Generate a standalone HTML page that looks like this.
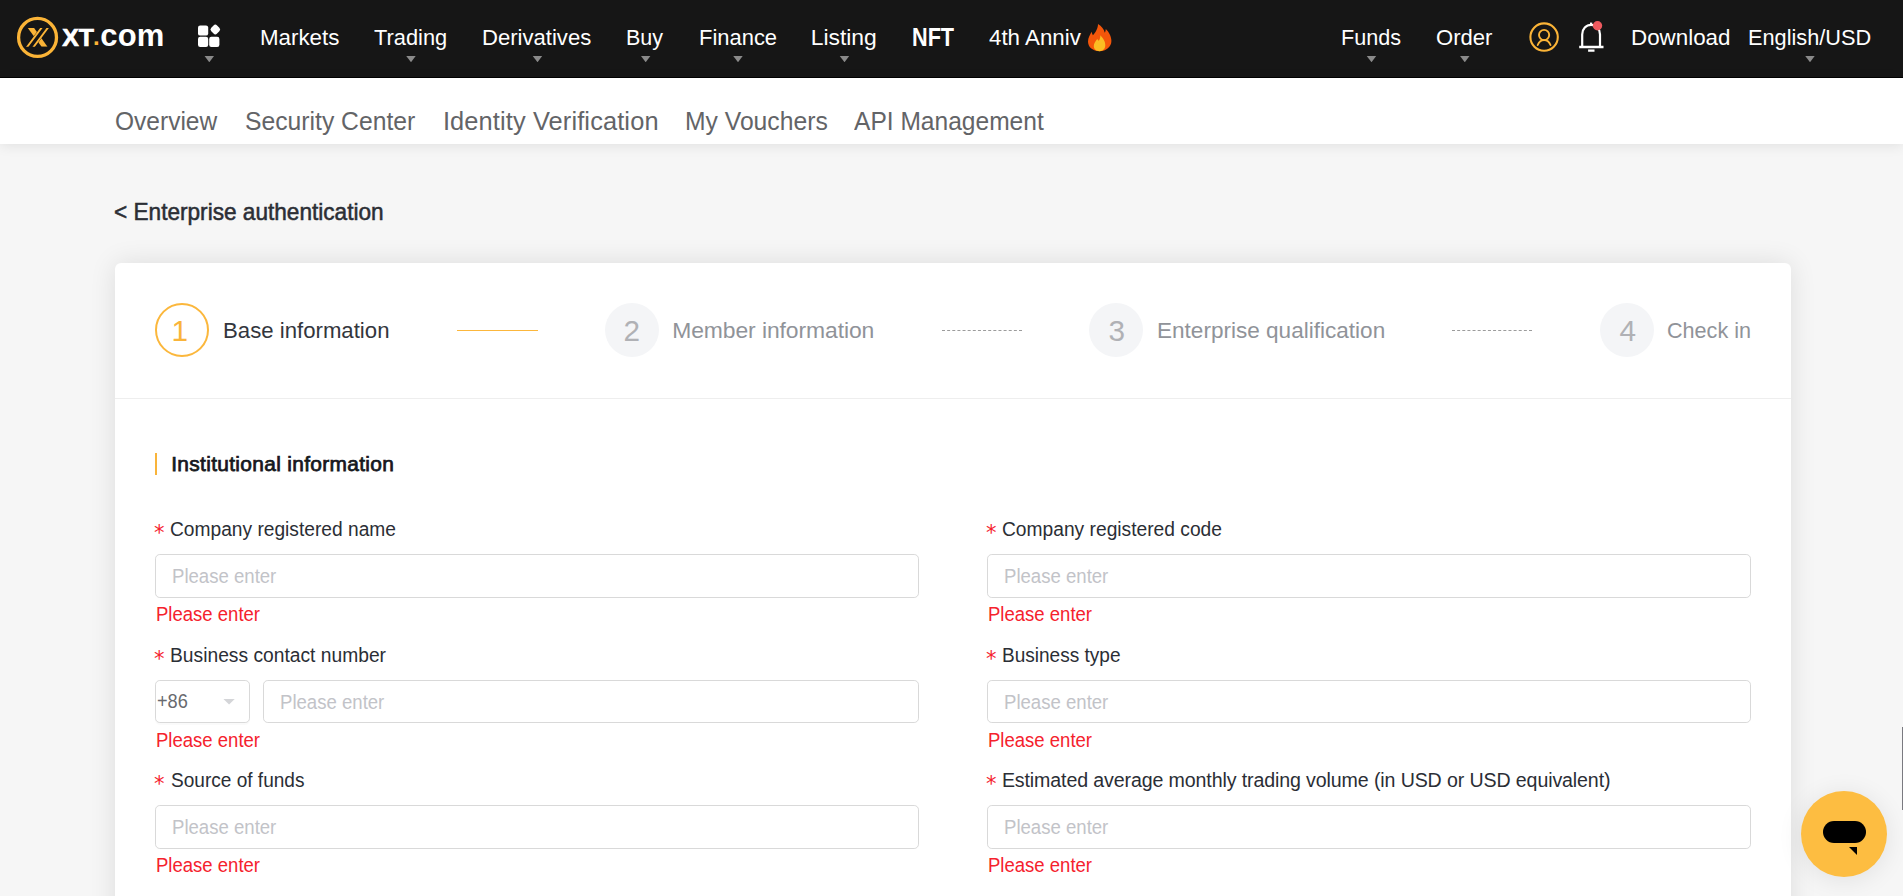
<!DOCTYPE html>
<html lang="en">
<head>
<meta charset="utf-8">
<title>XT.com - Enterprise authentication</title>
<style>
*{margin:0;padding:0;box-sizing:border-box}
h1,h2{font-weight:inherit;font-size:inherit}
i{font-style:normal}
html,body{width:1903px;height:896px;overflow:hidden}
body{position:relative;background:#f6f6f6;font-family:"Liberation Sans",sans-serif;}
.t{position:absolute;line-height:40px;white-space:pre;display:block;transform-origin:0 0}
header{position:absolute;left:0;top:0;width:1903px;height:78px;background:#161616;border-bottom:1px solid #000}
.ar{position:absolute;top:55.6px;width:10.2px;height:6.6px;background:#8a8a8a;clip-path:polygon(0 0,100% 0,50% 100%)}
.subnav{position:absolute;left:0;top:78px;width:1903px;height:66px;background:#fff;box-shadow:0 2px 12px rgba(0,0,0,.085)}
.card{position:absolute;left:115px;top:263px;width:1676px;height:700px;background:#fff;border-radius:6px;box-shadow:0 0 27px rgba(0,0,0,.105)}
.divider{position:absolute;left:115px;top:398px;width:1676px;height:1px;background:#eeeeee}
.circ{position:absolute;top:303px;width:54px;height:54px;border-radius:50%;background:#f4f5f7}
.circ.on{background:none}
.ln{position:absolute;top:330px;height:0;border-top:1px dashed #9c9c9c}
.ln.on{border-top:1px solid #fcb73c}
.bar{position:absolute;left:155px;top:453px;width:2px;height:22px;background:#f9b43a}
.inp{position:absolute;border:1px solid #d9d9d9;border-radius:4.8px;background:#fff}
.caret{position:absolute;left:223.2px;top:698.8px;width:11.8px;height:5.8px;background:#d4d5d8;clip-path:polygon(0 0,100% 0,50% 100%)}
.chat{position:absolute;left:1801px;top:791px;width:86px;height:86px;border-radius:50%;background:#fdbd41;box-shadow:0 3px 26px rgba(0,0,0,.09)}
.chat b{position:absolute;left:21.5px;top:30px;width:43px;height:22px;border-radius:11px;background:#000}
.chat i{position:absolute;left:48.1px;top:56.3px;width:0;height:0;border-left:8.8px solid transparent;border-top:8.6px solid #000}
.sb{position:absolute;left:1902px;top:727px;width:1px;height:83px;background:#7a7a80}
</style>
</head>
<body>
<header>
<svg class="logo" style="position:absolute;left:0;top:0" width="240" height="77" viewBox="0 0 240 77">
<defs><clipPath id="xc"><rect x="20" y="28.1" width="36" height="18.7"/></clipPath></defs>
<circle cx="37.55" cy="37.4" r="18.95" fill="none" stroke="#fbb437" stroke-width="3.3"/>
<g clip-path="url(#xc)">
<path d="M27.8 28.1h6.3l13.4 18.7h-5.9z" fill="#fbb437"/>
<path d="M44.45 28.1L30.5 46.8" stroke="#161616" stroke-width="7.5" transform="translate(0 0)" stroke-linecap="square"/>
<path d="M42 27.17L26.55 47.73M48.3 27.17L33 47.73" stroke="#fbb437" stroke-width="1.9" stroke-linecap="butt"/>
</g>
<text font-family="Liberation Sans, sans-serif" font-weight="700" fill="#fff"><tspan x="62.2" y="46.2" font-size="24" textLength="31.7" lengthAdjust="spacingAndGlyphs" stroke="#fff" stroke-width="0.7">XT</tspan><tspan x="93.1" y="45" font-size="24" fill="#fbb437">.</tspan><tspan x="100.2" y="46.3" font-size="31" letter-spacing="0.2">com</tspan></text>
<g fill="#fff">
<rect x="198" y="25.4" width="10.2" height="10.2" rx="2.2"/>
<rect x="198" y="36.8" width="10.2" height="10.2" rx="2.2"/>
<rect x="209.2" y="36.8" width="10.2" height="10.2" rx="2.2"/>
<rect x="211.2" y="25.4" width="8.2" height="8.2" rx="2.5" transform="rotate(45 215.3 29.5)"/>
</g>
</svg>
<nav>
<span class="t" style="left:260.02px;top:17px;font-size:22.9px;color:#fff;transform:scaleX(0.9755);">Markets</span>
<span class="t" style="left:374.30px;top:17px;font-size:22.9px;color:#fff;transform:scaleX(0.9535);">Trading</span>
<span class="t" style="left:482.24px;top:17px;font-size:22.9px;color:#fff;transform:scaleX(0.9645);">Derivatives</span>
<span class="t" style="left:626.06px;top:17px;font-size:22.9px;color:#fff;transform:scaleX(0.9385);">Buy</span>
<span class="t" style="left:699.04px;top:17px;font-size:22.9px;color:#fff;transform:scaleX(0.9585);">Finance</span>
<span class="t" style="left:810.70px;top:17px;font-size:22.9px;color:#fff;letter-spacing:-0.023px;">Listing</span>
<span class="t" style="left:911.73px;top:17px;font-size:25px;color:#fff;font-weight:700;transform:scaleX(0.8663);">NFT</span>
<span class="t" style="left:989.00px;top:17px;font-size:22.9px;color:#fff;transform:scaleX(0.9750);">4th Anniv</span>
<span class="t" style="left:1341.06px;top:17px;font-size:22.9px;color:#fff;transform:scaleX(0.9441);">Funds</span>
<span class="t" style="left:1436.04px;top:17px;font-size:22.9px;color:#fff;transform:scaleX(0.9639);">Order</span>
<span class="t" style="left:1630.72px;top:17px;font-size:22.9px;color:#fff;transform:scaleX(0.9773);">Download</span>
<span class="t" style="left:1747.75px;top:17px;font-size:22.9px;color:#fff;transform:scaleX(0.9490);">English/USD</span>
<i class="ar" style="left:204.2px"></i>
<i class="ar" style="left:405.9px"></i>
<i class="ar" style="left:532.4px"></i>
<i class="ar" style="left:640.6px"></i>
<i class="ar" style="left:732.9px"></i>
<i class="ar" style="left:839.4px"></i>
<i class="ar" style="left:1366.4px"></i>
<i class="ar" style="left:1459.7px"></i>
<i class="ar" style="left:1804.9px"></i>
<svg style="position:absolute;left:1087.8px;top:24px" width="24" height="28" viewBox="0 0 24 28">
<path d="M10 0C13.5 2 16.200 5.500 16.800 8.800C17.400 7.600 17.800 6.400 17.800 5C21 8 23.400 12.500 23.400 17C23.400 23 18 27.200 11.600 27.200C5 27.200 0 23.500 0 17.600C0 13.500 2.200 10.500 3.800 7.800C3.800 9 4.200 10.200 4.900 11.200C7.500 8.500 10 4.500 10 0Z" fill="#f4560a"/>
<path d="M12.300 11.300C14.500 13.500 17.300 17 17.300 21C17.300 25 14.800 27.200 11.600 27.200C8.200 27.200 5.800 25.200 5.800 22C5.800 19 7.800 17 9.300 15C9.600 15.800 10.200 16.400 10.800 16.800C12 15.200 12.500 13.200 12.300 11.300Z" fill="#fbbd23"/>
</svg>
<svg style="position:absolute;left:1520px;top:0" width="100" height="77" viewBox="1520 0 100 77" fill="none">
<circle cx="1544.1" cy="37.1" r="13.7" stroke="#fbb437" stroke-width="2.1"/>
<circle cx="1544.1" cy="35" r="5.1" stroke="#fbb437" stroke-width="1.9"/>
<path d="M1537.700 45c1.300-3.200 3.700-4.900 6.400-4.900s5.100 1.700 6.400 4.900" stroke="#fbb437" stroke-width="1.900" stroke-linecap="round"/>
<path d="M1582.200 47V34.400a8.900 9.600 0 0 1 17.800 0V47" stroke="#fff" stroke-width="2.200"/>
<path d="M1579.200 47h24.300" stroke="#fff" stroke-width="2.500"/>
<path d="M1591.100 25.200V22.600" stroke="#fff" stroke-width="2.200"/>
<path d="M1588.100 50.600h6.400" stroke="#fff" stroke-width="2.300"/>
<circle cx="1597.500" cy="25.700" r="4.700" fill="#ee5a5f"/>
</svg>
</nav>
</header>
<div class="subnav"></div>
<nav class="subnav-links">
<span class="t" style="left:114.53px;top:101px;font-size:25.4px;color:#636467;transform:scaleX(0.9661);">Overview</span>
<span class="t" style="left:244.53px;top:101px;font-size:25.4px;color:#636467;transform:scaleX(0.9729);">Security Center</span>
<span class="t" style="left:442.90px;top:101px;font-size:25.4px;color:#636467;letter-spacing:0.125px;">Identity Verification</span>
<span class="t" style="left:684.56px;top:101px;font-size:25.4px;color:#636467;transform:scaleX(0.9725);">My Vouchers</span>
<span class="t" style="left:854.30px;top:101px;font-size:25.4px;color:#636467;transform:scaleX(0.9672);">API Management</span>
</nav>
<main>
<h1><span class="t" style="left:114.05px;top:192px;font-size:23.8px;color:#2b2e35;-webkit-text-stroke:0.55px #2b2e35;transform:scaleX(0.9502);">&lt; Enterprise authentication</span></h1>
<section class="card"></section>
<div class="divider"></div>
<div class="steps">
<div class="circ on" style="left:155px"><svg width="54" height="54" viewBox="0 0 54 54" style="display:block"><circle cx="27" cy="27" r="26" fill="#fff" stroke="#fbb73c" stroke-width="2"/></svg></div>
<div class="circ" style="left:605px"></div>
<div class="circ" style="left:1089px"></div>
<div class="circ" style="left:1600px"></div>
<div class="ln on" style="left:457px;width:81px"></div>
<div class="ln" style="left:942px;width:80px"></div>
<div class="ln" style="left:1452px;width:80px"></div>
<span class="t" style="left:171.60px;top:311px;font-size:29.7px;color:#f9b43a;">1</span>
<span class="t" style="left:223.13px;top:310px;font-size:22.9px;color:#33363d;transform:scaleX(0.9692);">Base information</span>
<span class="t" style="left:623.60px;top:311px;font-size:29.7px;color:#b0b1b5;">2</span>
<span class="t" style="left:672.20px;top:310px;font-size:22.9px;color:#909399;letter-spacing:-0.083px;">Member information</span>
<span class="t" style="left:1108.50px;top:311px;font-size:29.7px;color:#b0b1b5;">3</span>
<span class="t" style="left:1156.51px;top:310px;font-size:22.9px;color:#909399;transform:scaleX(0.9854);">Enterprise qualification</span>
<span class="t" style="left:1619.40px;top:311px;font-size:29.7px;color:#b0b1b5;">4</span>
<span class="t" style="left:1667.36px;top:310px;font-size:22.9px;color:#909399;transform:scaleX(0.9436);">Check in</span>
</div>
<div class="bar"></div>
<h2><span class="t" style="left:171.20px;top:444px;font-size:20.9px;color:#16181d;letter-spacing:0.329px;-webkit-text-stroke:0.75px #16181d;">Institutional information</span></h2>
<form>
<div class="inp" style="left:155px;top:554px;width:764px;height:44px"></div>
<div class="inp" style="left:987px;top:554px;width:764px;height:44px"></div>
<div class="inp" style="left:155px;top:680px;width:95px;height:43px;box-shadow:0 2px 0 rgba(0,0,0,.02)"></div>
<div class="inp" style="left:263px;top:680px;width:656px;height:43px"></div>
<div class="inp" style="left:987px;top:680px;width:764px;height:43px"></div>
<div class="inp" style="left:155px;top:805px;width:764px;height:44px"></div>
<div class="inp" style="left:987px;top:805px;width:764px;height:44px"></div>
<i class="caret"></i>
<span class="t" style="left:154.05px;top:513px;font-size:21px;color:#f5222d;font-family:'DejaVu Sans',sans-serif;">*</span>
<span class="t" style="left:170.12px;top:509px;font-size:19.6px;color:#2b2e35;transform:scaleX(0.9787);">Company registered name</span>
<span class="t" style="left:986.05px;top:513px;font-size:21px;color:#f5222d;font-family:'DejaVu Sans',sans-serif;">*</span>
<span class="t" style="left:1001.92px;top:509px;font-size:19.6px;color:#2b2e35;transform:scaleX(0.9805);">Company registered code</span>
<span class="t" style="left:171.74px;top:557px;font-size:19.3px;color:#c2c3c8;transform:scaleX(0.9635);">Please enter</span>
<span class="t" style="left:1003.54px;top:557px;font-size:19.3px;color:#c2c3c8;transform:scaleX(0.9635);">Please enter</span>
<span class="t" style="left:155.64px;top:595px;font-size:19.3px;color:#f5222d;transform:scaleX(0.9607);">Please enter</span>
<span class="t" style="left:987.64px;top:595px;font-size:19.3px;color:#f5222d;transform:scaleX(0.9607);">Please enter</span>
<span class="t" style="left:154.05px;top:639px;font-size:21px;color:#f5222d;font-family:'DejaVu Sans',sans-serif;">*</span>
<span class="t" style="left:170.12px;top:635px;font-size:19.6px;color:#2b2e35;transform:scaleX(0.9819);">Business contact number</span>
<span class="t" style="left:986.05px;top:639px;font-size:21px;color:#f5222d;font-family:'DejaVu Sans',sans-serif;">*</span>
<span class="t" style="left:1001.93px;top:635px;font-size:19.6px;color:#2b2e35;transform:scaleX(0.9712);">Business type</span>
<span class="t" style="left:279.54px;top:683px;font-size:19.3px;color:#c2c3c8;transform:scaleX(0.9635);">Please enter</span>
<span class="t" style="left:1003.54px;top:683px;font-size:19.3px;color:#c2c3c8;transform:scaleX(0.9635);">Please enter</span>
<span class="t" style="left:155.64px;top:721px;font-size:19.3px;color:#f5222d;transform:scaleX(0.9607);">Please enter</span>
<span class="t" style="left:987.64px;top:721px;font-size:19.3px;color:#f5222d;transform:scaleX(0.9607);">Please enter</span>
<span class="t" style="left:154.05px;top:764px;font-size:21px;color:#f5222d;font-family:'DejaVu Sans',sans-serif;">*</span>
<span class="t" style="left:171.10px;top:760px;font-size:19.6px;color:#2b2e35;transform:scaleX(0.9727);">Source of funds</span>
<span class="t" style="left:986.05px;top:764px;font-size:21px;color:#f5222d;font-family:'DejaVu Sans',sans-serif;">*</span>
<span class="t" style="left:1001.90px;top:760px;font-size:19.6px;color:#2b2e35;letter-spacing:-0.118px;">Estimated average monthly trading volume (in USD or USD equivalent)</span>
<span class="t" style="left:171.74px;top:808px;font-size:19.3px;color:#c2c3c8;transform:scaleX(0.9635);">Please enter</span>
<span class="t" style="left:1003.54px;top:808px;font-size:19.3px;color:#c2c3c8;transform:scaleX(0.9635);">Please enter</span>
<span class="t" style="left:155.64px;top:846px;font-size:19.3px;color:#f5222d;transform:scaleX(0.9607);">Please enter</span>
<span class="t" style="left:987.64px;top:846px;font-size:19.3px;color:#f5222d;transform:scaleX(0.9607);">Please enter</span>
<span class="t" style="left:157.40px;top:681px;font-size:20px;color:#686a6e;transform:scaleX(0.9082);">+86</span>
</form>
</main>
<div class="chat"><b></b><i></i></div>
<div class="sb"></div>
</body>
</html>
